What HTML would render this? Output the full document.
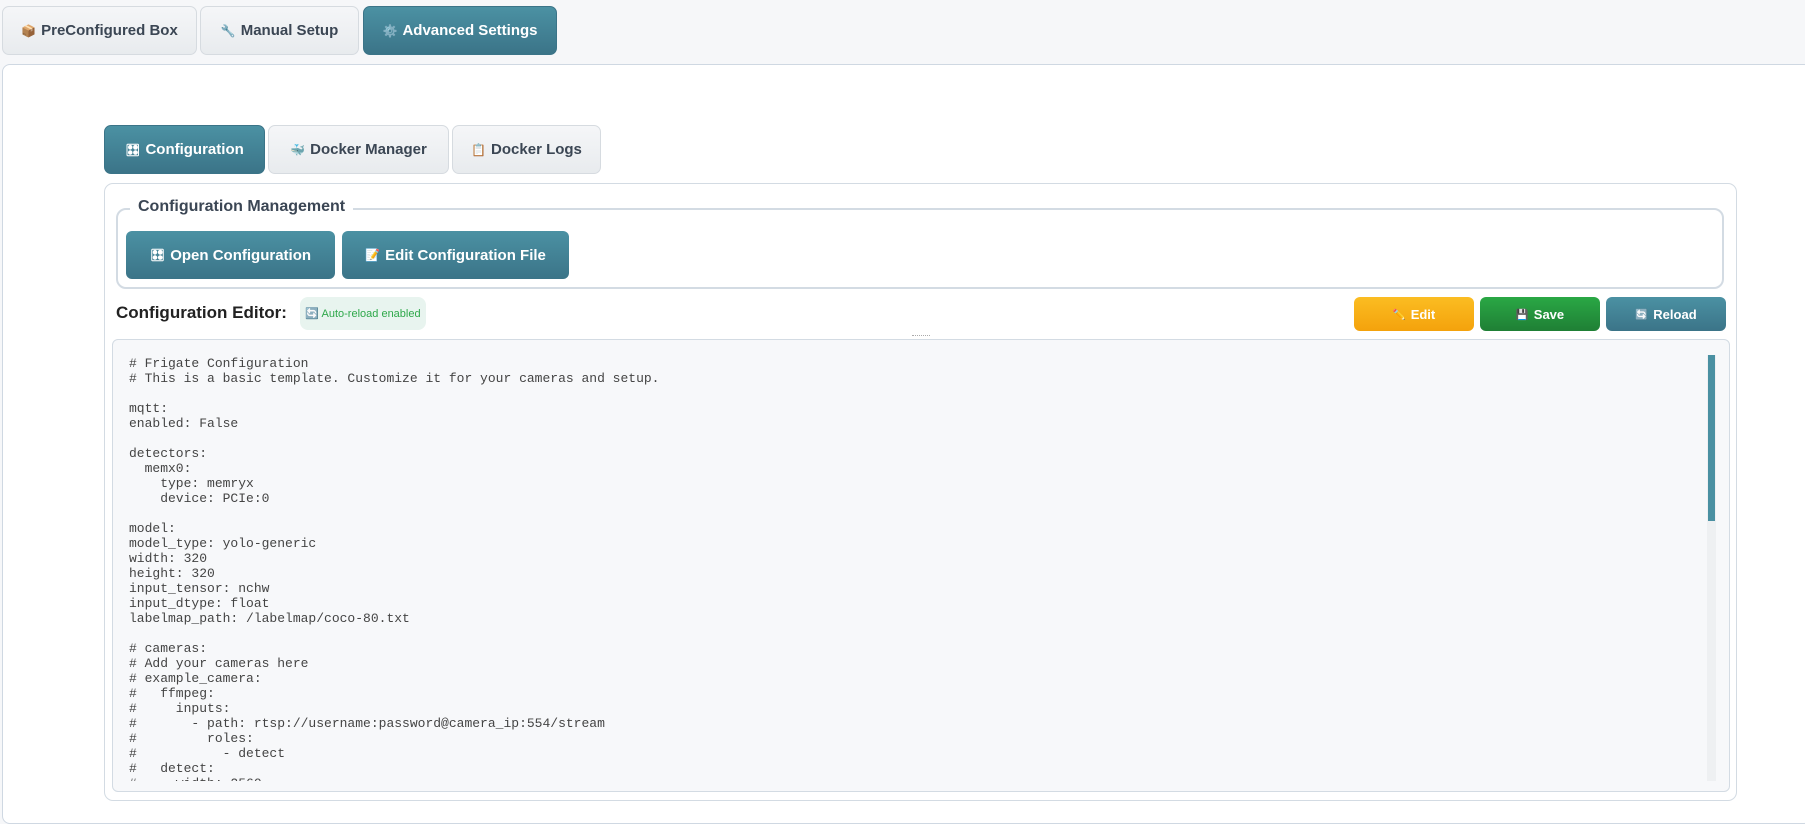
<!DOCTYPE html>
<html><head><meta charset="utf-8"><style>
*{box-sizing:border-box;margin:0;padding:0}
body{width:1805px;height:818px;background:#f6f7f9;font-family:"Liberation Sans","DejaVu Sans",sans-serif;position:relative;overflow:hidden;color:#333}
.abs{position:absolute}
.tab{position:absolute;border:1px solid #d6dbe0;border-radius:7px;background:linear-gradient(#f5f6f8,#e8ebee);font-family:"Liberation Sans",sans-serif;font-weight:bold;font-size:15px;color:#3b4654;display:flex;align-items:center;justify-content:center;white-space:nowrap}
.teal{background:linear-gradient(#4b91a3,#3b7488);color:#fff;border-color:#3b7488}
.btn{position:absolute;border-radius:6px;color:#fff;font-family:"Liberation Sans",sans-serif;font-weight:bold;font-size:13px;display:flex;align-items:center;justify-content:center;white-space:nowrap}
.i{font-size:0.8em;margin-right:5px}
pre{font-family:"Liberation Mono",monospace;font-size:13px;line-height:15px;color:#444}
</style></head><body>
<div class="tab" style="left:2px;top:6px;width:195px;height:49px"><span class="i">📦</span>PreConfigured Box</div>
<div class="tab" style="left:200px;top:6px;width:159px;height:49px"><span class="i">🔧</span>Manual Setup</div>
<div class="tab teal" style="left:363px;top:6px;width:194px;height:49px"><span class="i">⚙️</span>Advanced Settings</div>
<div class="abs" style="left:2px;top:64px;width:1810px;height:760px;background:#fff;border:1px solid #cfd8e2;border-radius:8px"></div>
<div class="tab teal" style="left:104px;top:125px;width:161px;height:49px"><span class="i">🎛</span>Configuration</div>
<div class="tab" style="left:268px;top:125px;width:181px;height:49px"><span class="i">🐳</span>Docker Manager</div>
<div class="tab" style="left:452px;top:125px;width:149px;height:49px"><span class="i">📋</span>Docker Logs</div>
<div class="abs" style="left:104px;top:183px;width:1633px;height:618px;border:1px solid #d3dbe3;border-radius:9px;background:#fff"></div>
<div class="abs" style="left:116px;top:208px;width:1608px;height:81px;border:2px solid #d3dbe3;border-radius:10px"></div>
<div class="abs" style="left:130px;top:198px;padding:0 8px;background:#fff;font-family:'Liberation Sans',sans-serif;font-weight:bold;font-size:16px;color:#3b4654">Configuration Management</div>
<div class="btn" style="left:126px;top:231px;width:209px;height:48px;background:linear-gradient(#4b91a3,#3b7488);font-size:15px"><span class="i">🎛</span>Open Configuration</div>
<div class="btn" style="left:342px;top:231px;width:227px;height:48px;background:linear-gradient(#4b91a3,#3b7488);font-size:15px"><span class="i">📝</span>Edit Configuration File</div>
<div class="abs" style="left:116px;top:303px;font-family:'Liberation Sans',sans-serif;font-weight:bold;font-size:17px;color:#222;white-space:nowrap">Configuration Editor:</div>
<div class="abs" style="left:300px;top:297px;width:126px;height:33px;background:#e8f4ef;border-radius:8px;color:#2ea84a;font-size:11px;font-family:'Liberation Sans',sans-serif;display:flex;align-items:center;justify-content:center;white-space:nowrap">🔄 Auto-reload enabled</div>
<div class="btn" style="left:1354px;top:297px;width:120px;height:34px;background:linear-gradient(#fbbd22,#f4a20c)"><span class="i">✏️</span>Edit</div>
<div class="btn" style="left:1480px;top:297px;width:120px;height:34px;background:linear-gradient(#2aa845,#1f7f35)"><span class="i">💾</span>Save</div>
<div class="btn" style="left:1606px;top:297px;width:120px;height:34px;background:linear-gradient(#4b91a3,#3b7488)"><span class="i">🔄</span>Reload</div>
<div class="abs" style="left:912px;top:335px;width:18px;height:2px;border-top:1px dotted #aaa"></div>
<div class="abs" style="left:112px;top:339px;width:1618px;height:453px;background:#f7f8fa;border:1px solid #d3dbe3;border-radius:6px;overflow:hidden">
<div class="abs" style="left:1594px;top:15px;width:9px;height:426px;background:#eef0f2"></div>
<div class="abs" style="left:1595px;top:15px;width:7px;height:166px;background:#4a90a2"></div>
<div class="abs" style="left:16px;top:16px;height:425px;overflow:hidden"><pre># Frigate Configuration
# This is a basic template. Customize it for your cameras and setup.

mqtt:
enabled: False

detectors:
  memx0:
    type: memryx
    device: PCIe:0

model:
model_type: yolo-generic
width: 320
height: 320
input_tensor: nchw
input_dtype: float
labelmap_path: /labelmap/coco-80.txt

# cameras:
# Add your cameras here
# example_camera:
#   ffmpeg:
#     inputs:
#       - path: rtsp://username:password@camera_ip:554/stream
#         roles:
#           - detect
#   detect:
#     width: 2560</pre></div>
</div>
</body></html>
